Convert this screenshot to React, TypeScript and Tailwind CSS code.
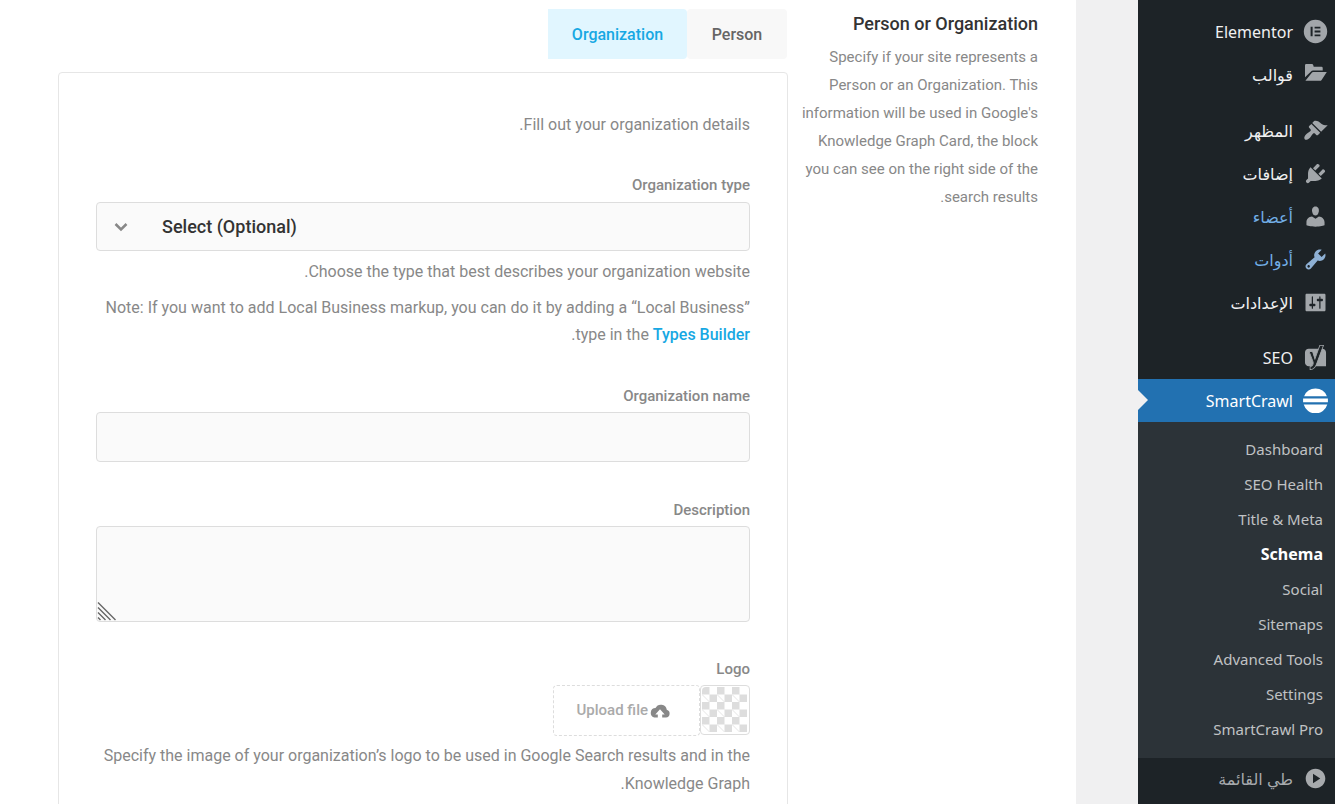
import React from "react";

type IconProps = { children: React.ReactNode; viewBox?: string; className?: string };

function Icon({ children, viewBox = "0 0 20 20", className = "" }: IconProps) {
  return (
    <svg viewBox={viewBox} fill="currentColor" aria-hidden="true" className={`size-[25px] shrink-0 ${className}`}>
      {children}
    </svg>
  );
}

const icons = {
  elementor: (
    <Icon viewBox="0 0 25 25">
      <path
        fillRule="evenodd"
        d="M12.5 .8a11.7 11.7 0 1 0 0 23.4a11.7 11.7 0 0 0 0-23.4zM7.6 7.7h2v9.6h-2zM11.6 7.7h5.8v1.8h-5.8zM11.6 11.6h5.8v1.8h-5.8zM11.6 15.5h5.8v1.8h-5.8z"
      />
    </Icon>
  ),
  folder: (
    <Icon viewBox="0 0 25 25">
      <path d="M2 15.3V3.200Q2 2 3.200 2H8.800Q10 2 10.300 3.200L10.700 4.800H18.500Q19.700 4.800 19.700 6V8.600H10.200Q8.700 8.600 7.800 9.700z" />
      <path d="M2.400 18.800L8.600 10.900Q9.200 10 10.400 10H23.800L18.600 17.900Q18 18.800 17 18.800z" />
    </Icon>
  ),
  brush: (
    <Icon>
      <path d="M14.48 11.06L7.41 3.99l1.5-1.5c.5-.56 2.3-.47 3.51.32 1.21.8 1.43 1.28 2.91 2.1 1.18.64 2.45 1.26 4.45.85zm-.71.71L6.7 4.7 4.93 6.47c-.39.39-.39 1.02 0 1.41l1.06 1.06c.39.39.39 1.03 0 1.42-.6.6-1.43 1.11-2.21 1.69-.35.26-.7.53-1.01.84C1.43 14.23.4 16.08 1.4 17.07c.99 1 2.84-.03 4.18-1.36.31-.31.58-.66.85-1.02.57-.78 1.08-1.61 1.69-2.21.39-.39 1.02-.39 1.41 0l1.06 1.06c.39.39 1.02.39 1.41 0z" />
    </Icon>
  ),
  plug: (
    <Icon>
      <path d="M13.11 4.36L9.87 7.6 8 5.73l3.24-3.24c.35-.34 1.05-.2 1.56.32.52.51.66 1.21.31 1.55zm-8 1.77l.91-1.12 9.01 9.01-1.19.84c-.71.71-2.63 1.16-3.82 1.16H6.14L4.9 17.26c-.59.59-1.54.59-2.12 0-.59-.58-.59-1.53 0-2.12l1.24-1.24v-3.88c0-1.13.4-3.19 1.09-3.89zm7.26 3.97l3.24-3.24c.34-.35 1.04-.21 1.55.31.52.51.66 1.21.31 1.55l-3.24 3.25z" />
    </Icon>
  ),
  user: (
    <Icon>
      <path d="M10 9.25c-2.27 0-2.73-3.44-2.73-3.44C7 4.02 7.82 2 9.97 2c2.16 0 2.98 2.02 2.71 3.81 0 0-.41 3.44-2.68 3.44zm0 2.57L12.72 10c2.39 0 4.52 2.33 4.52 4.53v2.49s-3.65 1.13-7.24 1.13c-3.65 0-7.24-1.13-7.24-1.13v-2.49c0-2.25 1.94-4.48 4.47-4.48z" />
    </Icon>
  ),
  wrench: (
    <Icon>
      <path d="M16.68 9.77c-1.34 1.34-3.3 1.67-4.95.99l-5.41 6.52c-.99.99-2.59.99-3.58 0s-.99-2.59 0-3.57l6.52-5.42c-.68-1.65-.35-3.61.99-4.95 1.28-1.28 3.12-1.62 4.72-1.06l-2.89 2.89 2.82 2.82 2.86-2.87c.53 1.58.18 3.39-1.08 4.65zM3.81 16.21c.4.39 1.04.39 1.43 0 .4-.4.4-1.04 0-1.43-.39-.4-1.03-.4-1.43 0-.39.39-.39 1.03 0 1.43z" />
    </Icon>
  ),
  sliders: (
    <Icon>
      <path d="M18 16V4c0-.55-.45-1-1-1H3c-.55 0-1 .45-1 1v12c0 .55.45 1 1 1h14c.55 0 1-.45 1-1zM8 11h1c.55 0 1 .45 1 1s-.45 1-1 1H8v1.5c0 .28-.22.5-.5.5s-.5-.22-.5-.5V13H6c-.55 0-1-.45-1-1s.45-1 1-1h1V5.5c0-.28.22-.5.5-.5s.5.22.5.5V11zm5-2h-1c-.55 0-1-.45-1-1s.45-1 1-1h1V5.5c0-.28.22-.5.5-.5s.5.22.5.5V7h1c.55 0 1 .45 1 1s-.45 1-1 1h-1v5.5c0 .28-.22.5-.5.5s-.5-.22-.5-.5V9z" />
    </Icon>
  ),
  yoast: (
    <Icon viewBox="0 0 512 512">
      <path d="M203.6 395c6.8-17.4 6.8-36.6 0-54l-79.4-204h70.9l47.7 149.4 74.8-207.6H116.4c-41.8 0-76 34.2-76 76V357c0 41.8 34.2 76 76 76H173c16-8.9 24.6-22.7 30.6-38zM471.6 154.8c0-41.8-34.2-76-76-76h-3L285.7 365c-9.6 26.7-19.4 49.3-30.3 68h216.2V154.8z" />
      <path d="M338 1.3l-93.3 259.1-42.1-131.9h-89.1l83.8 215.2c6 15.5 6 32.5 0 48-7.4 19-19 37.3-53 41.9l-7.2 1v76h8.3c81.7 0 118.9-57.2 149.6-142.9L431.6 1.3H338zM279.4 362c-32.9 92-67.6 128.7-125.7 131.8v-45c37.5-7.5 51.3-31 59.1-51.1 7.5-19.3 7.5-40.7 0-60l-75-192.7h52.8l53.3 166.8 105.9-294h58.1L279.4 362z" />
    </Icon>
  ),
  smartcrawl: (
    <Icon viewBox="0 0 25 25">
      <path d="M1.100 8.200A12.300 12.300 0 0 1 23.900 8.200zM.1 10.600H24.900V14.200H.1zM.7 16.600H24.300A12.300 12.300 0 0 1 .7 16.600z" />
    </Icon>
  ),
  collapse: (
    <Icon>
      <path d="M10 17.84c-4.33 0-7.84-3.51-7.84-7.84S5.67 2.16 10 2.16s7.84 3.51 7.84 7.84-3.55 7.84-7.84 7.84zM8 6.12v7.76l5.82-3.85z" />
    </Icon>
  ),
};

function MenuItem({ icon, label, highlight = false }: { icon: React.ReactNode; label: string; highlight?: boolean }) {
  return (
    <a
      href="#"
      className={`flex h-[43px] items-center gap-[10px] pr-[7px] text-base ${highlight ? "text-[#72aee6]" : "text-[#f0f0f1]"}`}
    >
      <span className={highlight && label === "أدوات" ? "text-[#8eb0d4]" : "text-[#a2a6aa]"}>{icon}</span>
      <span>{label}</span>
    </a>
  );
}

const submenu = [
  "Dashboard",
  "SEO Health",
  "Title & Meta",
  "Schema",
  "Social",
  "Sitemaps",
  "Advanced Tools",
  "Settings",
  "SmartCrawl Pro",
];

function Sidebar() {
  return (
    <nav className="w-[197px] shrink-0 bg-[#1d2327] pt-[10px] font-['Noto_Sans','DejaVu_Sans',sans-serif]">
      <MenuItem icon={icons.elementor} label="Elementor" />
      <MenuItem icon={icons.folder} label="قوالب" />
      <div className="mt-[13px]">
        <MenuItem icon={icons.brush} label="المظهر" />
        <MenuItem icon={icons.plug} label="إضافات" />
        <MenuItem icon={icons.user} label="أعضاء" highlight />
        <MenuItem icon={icons.wrench} label="أدوات" highlight />
        <MenuItem icon={icons.sliders} label="الإعدادات" />
      </div>
      <div className="mt-3">
        <MenuItem icon={icons.yoast} label="SEO" />
      </div>
      <a
        href="#"
        className="relative flex h-[43px] items-center gap-[10px] bg-[#2271b1] pr-[7px] text-base text-white"
      >
        {icons.smartcrawl}
        <span>SmartCrawl</span>
        <span className="absolute left-0 top-[11px] border-y-[10px] border-l-[10px] border-y-transparent border-l-[#f0f0f1]" />
      </a>
      <ul className="bg-[#2c3338] pb-3 pt-[9px]">
        {submenu.map((label) => (
          <li key={label}>
            <a
              href="#"
              className={`flex h-[35px] items-center pr-3 ${label === "Schema" ? "text-base font-bold text-white" : "text-[15px] text-[#c0c2c4]"}`}
            >
              {label}
            </a>
          </li>
        ))}
      </ul>
      <button type="button" className="flex h-[41px] w-full items-center gap-[10px] pr-[7px] text-base text-[#a7aaad]">
        {icons.collapse}
        <span>طي القائمة</span>
      </button>
    </nav>
  );
}

const label = "block text-[15px] font-medium leading-5 text-[#888]";
const field = "block w-full rounded border border-[#ddd] bg-[#fafafa] outline-none";

function OrganizationForm() {
  return (
    <form className="mt-[13px] rounded border border-[#e6e6e6] px-[37px] pb-10 pt-[38px]">
      <p>Fill out your organization details.</p>

      <div className="mt-9">
        <label htmlFor="org-type" className={label}>
          Organization type
        </label>
        <div className="relative mt-[7px]">
          <select
            id="org-type"
            dir="ltr"
            className={`${field} h-[49px] appearance-none pl-[65px] text-lg font-medium text-[#333]`}
          >
            <option>Select (Optional)</option>
          </select>
          <svg
            viewBox="0 0 14 10"
            aria-hidden="true"
            className="pointer-events-none absolute left-[18px] top-5 h-[10px] w-[14px] fill-none stroke-[#888]"
          >
            <path d="M1.5 2L7 7.5L12.5 2" strokeWidth="2.5" />
          </svg>
        </div>
        <p className="mt-[7px]">Choose the type that best describes your organization website.</p>
        <p className="mt-2 leading-[27px]">
          Note: If you want to add Local Business markup, you can do it by adding a “Local Business” type in the{" "}
          <a href="#" className="font-medium text-[#17a8e3]">
            Types Builder
          </a>
          .
        </p>
      </div>

      <div className="mt-[38px]">
        <label htmlFor="org-name" className={label}>
          Organization name
        </label>
        <input id="org-name" type="text" className={`${field} mt-[6px] h-[50px] px-4`} />
      </div>

      <div className="mt-[38px]">
        <label htmlFor="org-description" className={label}>
          Description
        </label>
        <div className="relative mt-[6px]">
          <textarea id="org-description" className={`${field} h-24 resize-none px-4 py-2`} />
          <svg
            viewBox="0 0 20 20"
            aria-hidden="true"
            className="pointer-events-none absolute bottom-[1px] left-[1px] size-5 fill-none stroke-[#666]"
          >
            <path d="M1 1.5L18.5 19M1 6.500L13.500 19M1 11.500L8.500 19M1 16.500L3.500 19" strokeWidth="1.4" />
          </svg>
        </div>
      </div>

      <div className="mt-[37px]">
        <label htmlFor="org-logo" className={label}>
          Logo
        </label>
        <div className="mt-[6px] flex">
          <div className="size-[50px] rounded border border-[#ddd] p-[1px]">
            <svg viewBox="0 0 46 46" aria-hidden="true" className="size-full rounded">
              <defs>
                <pattern id="checker" width="15" height="15" patternUnits="userSpaceOnUse">
                  <path d="M0 0h7.5v7.5H0zM7.5 7.5H15V15H7.5z" fill="#ddd" />
                  <path d="M0 7.5L7.5 15" stroke="#ddd" strokeWidth=".8" />
                </pattern>
              </defs>
              <rect width="45" height="45" fill="url(#checker)" />
            </svg>
          </div>
          <button
            id="org-logo"
            type="button"
            className="flex h-[51px] w-[147px] items-center gap-[2px] rounded border border-dashed border-[#ddd] pb-[2px] pr-[29px] text-[15px] font-medium text-[#aaa]"
          >
            <svg viewBox="0 0 20 14" aria-hidden="true" className="mt-[2px] h-[14px] w-5 shrink-0 fill-[#888]">
              <path d="M4.200 13.500H7.800V10.500H5.300L10 5.300L14.700 10.500H12.200V13.500H16A4 4 0 0 0 16.800 5.700A6 6 0 0 0 5.500 4.100A4.800 4.800 0 0 0 4.200 13.500z" />
            </svg>
            <span>Upload file</span>
          </button>
        </div>
        <p className="mt-[6px]">
          Specify the image of your organization’s logo to be used in Google Search results and in the Knowledge
          Graph.
        </p>
      </div>
    </form>
  );
}

export default function App() {
  return (
    <div dir="rtl" className="flex h-screen overflow-hidden bg-[#f0f0f1] font-[Roboto,sans-serif] text-base leading-7 text-[#888]">
      <Sidebar />
      <main className="mr-[62px] flex min-w-0 flex-1 bg-white pl-[58px] pr-[38px] pt-[9px]">
        <section className="w-[250px] shrink-0 pl-1 pt-[1px]">
          <h2 className="text-lg font-medium leading-7 text-[#333]">Person or Organization</h2>
          <p className="mt-[5px] text-[15px] leading-7">
            Specify if your site represents a Person or an Organization. This information will be used in Google's
            Knowledge Graph Card, the block you can see on the right side of the search results.
          </p>
        </section>
        <section className="min-w-0 flex-1">
          <div role="tablist" className="flex bg-white pr-[1px] font-medium">
            <button
              type="button"
              role="tab"
              aria-selected="false"
              className="h-[50px] w-[100px] rounded bg-[#f8f8f8] pt-[2px] text-[#666]"
            >
              Person
            </button>
            <button
              type="button"
              role="tab"
              aria-selected="true"
              className="h-[50px] w-[139px] rounded-r bg-[#e1f6ff] pt-[2px] text-[#17a8e3]"
            >
              Organization
            </button>
          </div>
          <OrganizationForm />
        </section>
      </main>
    </div>
  );
}
